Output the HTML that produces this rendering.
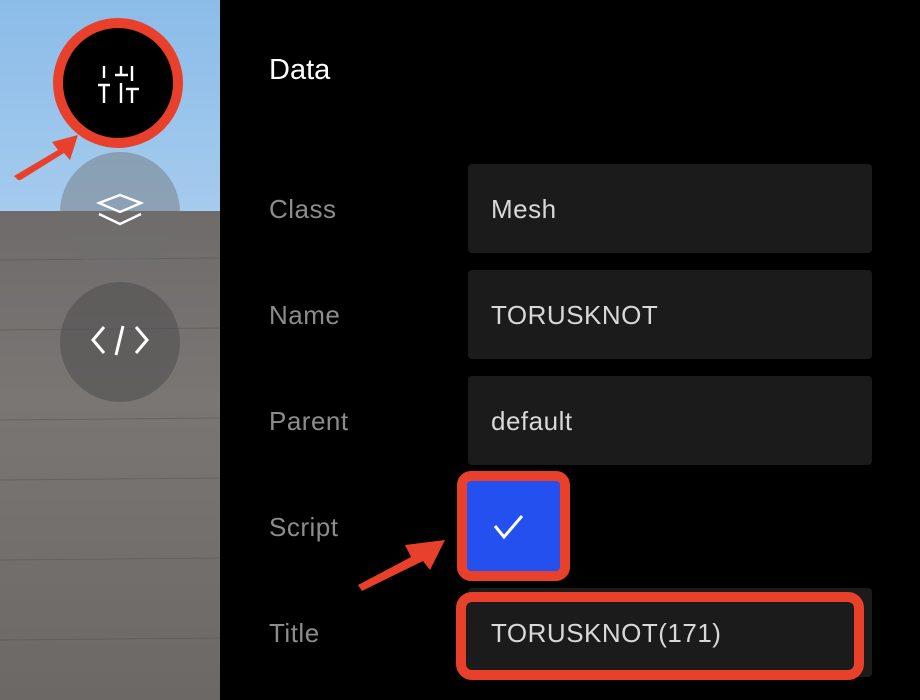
<!DOCTYPE html>
<html><head><style>
body{margin:0;width:920px;height:700px;background:#000;position:relative;overflow:hidden;font-family:"Liberation Sans",sans-serif}
.side{position:absolute;left:0;top:0;width:220px;height:700px;background:linear-gradient(#8bbce8,#a5cbee 211px,#6f6b6a 211px,#7a7674 400px,#6c6866 700px)}
.c{position:absolute;border-radius:50%}
.lab{position:absolute;left:269px;color:#8c8c8c;font-size:26px;letter-spacing:.5px}
.box{position:absolute;left:468px;width:404px;height:89px;background:#1b1b1b;border-radius:4px}
.val{position:absolute;left:491px;color:#d8d8d8;font-size:26px;letter-spacing:.5px}
</style></head><body>
<div class="side">
<svg width="220" height="700" style="position:absolute;left:0;top:0">
<g stroke="#5a5756" stroke-width="1" opacity=".6"><line x1="0" y1="260" x2="220" y2="258"/><line x1="0" y1="330" x2="220" y2="328"/><line x1="0" y1="420" x2="220" y2="418"/><line x1="0" y1="480" x2="220" y2="478"/><line x1="0" y1="560" x2="220" y2="558"/><line x1="0" y1="640" x2="220" y2="638"/></g>
</svg>
</div>
<div class="c" style="left:53px;top:18px;width:110px;height:110px;background:#000;border:10px solid #e8402a"></div>
<svg style="position:absolute;left:95px;top:62px" width="50" height="42" stroke="#fff" stroke-width="2.4" fill="none">
<path d="M9 4V16M3 23H15M9 23V41M20 13H33M26 4V13M26 21V41M37 4V19M31 27H44M37 27V41"/></svg>
<svg style="position:absolute;left:10px;top:130px" width="75" height="50"><path d="M4 46L48 20L42 12L68 5L60 30L54 23L9 51Z" fill="#e8402a"/></svg>
<div class="c" style="left:60px;top:152px;width:120px;height:120px;background:rgba(110,110,110,.45)"></div>
<svg style="position:absolute;left:96px;top:192px" width="48" height="38" stroke="#fff" stroke-width="2.4" fill="none"><path d="M3 11L24 3L45 11L24 20Z M3 22L24 32L45 22"/></svg>
<div class="c" style="left:60px;top:282px;width:120px;height:120px;background:rgba(80,80,80,.6)"></div>
<svg style="position:absolute;left:90px;top:322px" width="60" height="40" stroke="#fff" stroke-width="3" fill="none"><path d="M14 5L3 18L14 31M46 5L57 18L46 31M33 4L26 33"/></svg>
<div style="position:absolute;left:269px;top:54px;color:#fff;font-size:29px">Data</div>
<div class="lab" style="top:194px">Class</div><div class="box" style="top:164px"></div><div class="val" style="top:194px">Mesh</div>
<div class="lab" style="top:300px">Name</div><div class="box" style="top:270px"></div><div class="val" style="top:300px">TORUSKNOT</div>
<div class="lab" style="top:406px">Parent</div><div class="box" style="top:376px"></div><div class="val" style="top:406px">default</div>
<div class="lab" style="top:512px">Script</div>
<div style="position:absolute;left:457px;top:471px;width:93px;height:90px;border:10px solid #e8402a;border-radius:14px;background:#2350ef"></div>
<svg style="position:absolute;left:492px;top:512px" width="42" height="32" stroke="#fff" stroke-width="3" fill="none"><path d="M3 14L12 25L30 4"/></svg>
<svg style="position:absolute;left:355px;top:535px" width="95" height="60"><path d="M3 50L56 22L50 10L90 5L75 35L68 26L7 56Z" fill="#e8402a"/></svg>
<div class="lab" style="top:618px">Title</div>
<div class="box" style="top:588px"></div>
<div style="position:absolute;left:456px;top:592px;width:388px;height:68px;border:10px solid #e8402a;border-radius:16px;background:#1b1b1b"></div>
<div class="val" style="top:618px">TORUSKNOT(171)</div>
</body></html>
